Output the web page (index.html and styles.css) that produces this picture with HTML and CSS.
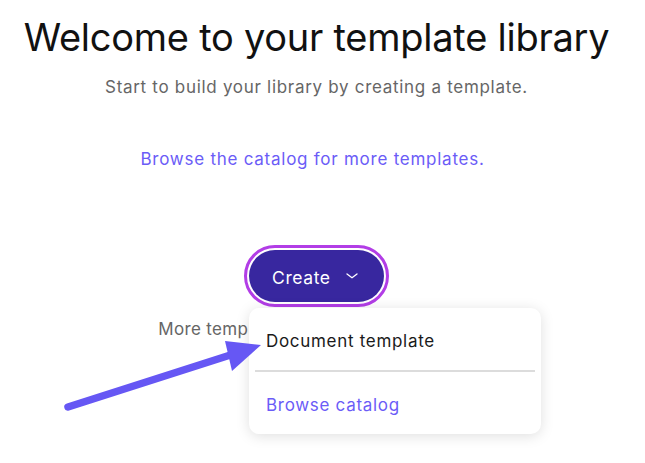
FILE: index.html
```html
<!DOCTYPE html>
<html>
<head>
<meta charset="utf-8">
<link rel="stylesheet" href="styles.css">
</head>
<body>
<main class="page">
  <h1 class="title">Welcome to your template library</h1>
  <p class="subtitle">Start to build your library by creating a template.</p>
  <a class="catalog-link" href="#">Browse the catalog for more templates.</a>
  <div class="create-wrap">
    <div class="ring">
      <button class="create-btn">Create
        <svg class="chev" width="12" height="6" viewBox="0 0 12 6"><path d="M1 1 L6 4.8 L11 1" fill="none" stroke="#fff" stroke-width="1.3" stroke-linecap="round" stroke-linejoin="round"/></svg>
      </button>
      <div class="menu">
        <div class="menu-item">Document template</div>
        <div class="menu-sep"></div>
        <div class="menu-item link">Browse catalog</div>
      </div>
    </div>
    <p class="more">More templates are in the full catalog.</p>
  </div>
</main>
<svg class="arrow" width="645" height="463" viewBox="0 0 645 463">
  <line x1="68" y1="407" x2="246" y2="350" stroke="#6657f4" stroke-width="7.5" stroke-linecap="round"/>
  <polygon points="261,345 225,341 232,371" fill="#6657f4"/>
</svg>
</body>
</html>
```
FILE: styles.css
```css
html, body {
  margin: 0;
  padding: 0;
  background: #fff;
  overflow: hidden;
}
body {
  width: 645px;
  height: 463px;
  position: relative;
  font-family: Inter, "Noto Sans", sans-serif;
}
.page {
  width: 633px;
  display: flex;
  flex-direction: column;
  align-items: center;
}
.title {
  margin: 12px 0 0;
  font-size: 38px;
  font-weight: 400;
  color: #111;
  letter-spacing: -0.25px;
  line-height: 50px;
}
.subtitle {
  margin: 13px 0 0;
  font-size: 17px;
  letter-spacing: 0.7px;
  color: #666;
  line-height: 24px;
}
.catalog-link {
  margin: 48px 8px 0 0;
  font-size: 17px;
  letter-spacing: 0.75px;
  color: #6b5cf7;
  text-decoration: none;
  line-height: 24px;
}
.create-wrap {
  margin-top: 74px;
  display: flex;
  flex-direction: column;
  align-items: center;
}
.ring {
  position: relative;
  border: 3px solid #b23de6;
  border-radius: 32px;
  padding: 2px;
  background: #fff;
}
.create-btn {
  display: flex;
  align-items: center;
  gap: 15px;
  height: 52px;
  width: 135px;
  padding: 2px 0 0 23px;
  border: none;
  border-radius: 28px;
  background: #38279f;
  color: #fff;
  font-family: Inter, "Noto Sans", sans-serif;
  font-size: 17.5px;
  letter-spacing: 0.6px;
}
.chev { margin-top: -3px; }
.more {
  margin: 10px 0 0;
  font-size: 17px;
  letter-spacing: 0.35px;
  color: #666;
  line-height: 24px;
}
.menu {
  position: absolute;
  left: 2px;
  top: 60px;
  width: 292px;
  height: 126px;
  background: #fff;
  border-radius: 10px;
  box-shadow: 0 2px 14px rgba(0,0,0,0.13);
  padding: 0 6px;
  box-sizing: border-box;
  z-index: 2;
}
.menu-item {
  padding: 4px 11px 0;
  height: 62px;
  box-sizing: border-box;
  display: flex;
  align-items: center;
  font-size: 17px;
  letter-spacing: 0.7px;
  color: #1a1a1a;
}
.menu-item.link { color: #6b5cf7; }
.menu-sep {
  height: 2px;
  background: #dcdcdc;
}
.arrow {
  position: absolute;
  left: 0;
  top: 0;
  z-index: 3;
  pointer-events: none;
}
```
